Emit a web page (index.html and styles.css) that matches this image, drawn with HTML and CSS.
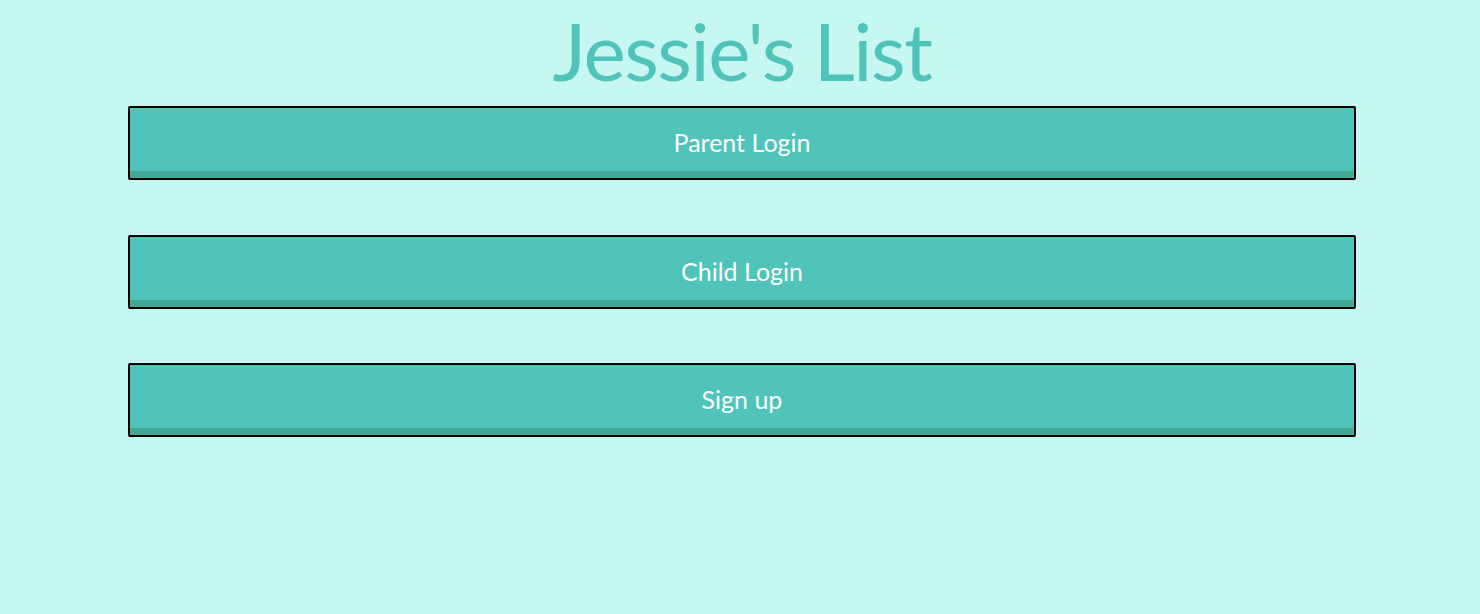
FILE: index.html
```html
<!DOCTYPE html>
<html>
<head>
<meta charset="utf-8">
<link rel="stylesheet" href="styles.css">
</head>
<body>
<main class="page">
  <h1 class="title">Jessie's List</h1>
  <div class="buttons">
    <button class="btn">Parent Login</button>
    <button class="btn">Child Login</button>
    <button class="btn">Sign up</button>
  </div>
</main>
</body>
</html>
```
FILE: styles.css
```css
html, body {
  margin: 0;
  padding: 0;
  background: #c6f7f0;
  height: 100%;
}
.page {
  font-family: Lato, "Noto Sans", sans-serif;
  padding: 0 124px 0 128px;
}
.title {
  margin: 0;
  height: 106px;
  text-align: center;
  color: #50c4b8;
  font-weight: 400;
  font-size: 80px;
  line-height: 100px;
  letter-spacing: -1.5px;
}
.buttons {
  display: flex;
  flex-direction: column;
  gap: 54.5px;
}
.btn {
  display: block;
  width: 100%;
  height: 74px;
  margin: 0;
  padding: 0 0 2px;
  border: 2px solid #000;
  border-radius: 2px;
  background: #50c4b8;
  box-shadow: inset 0 -7px 0 #44a898;
  color: #fff;
  font-family: Lato, "Noto Sans", sans-serif;
  font-size: 25px;
  font-weight: 400;
}
```
